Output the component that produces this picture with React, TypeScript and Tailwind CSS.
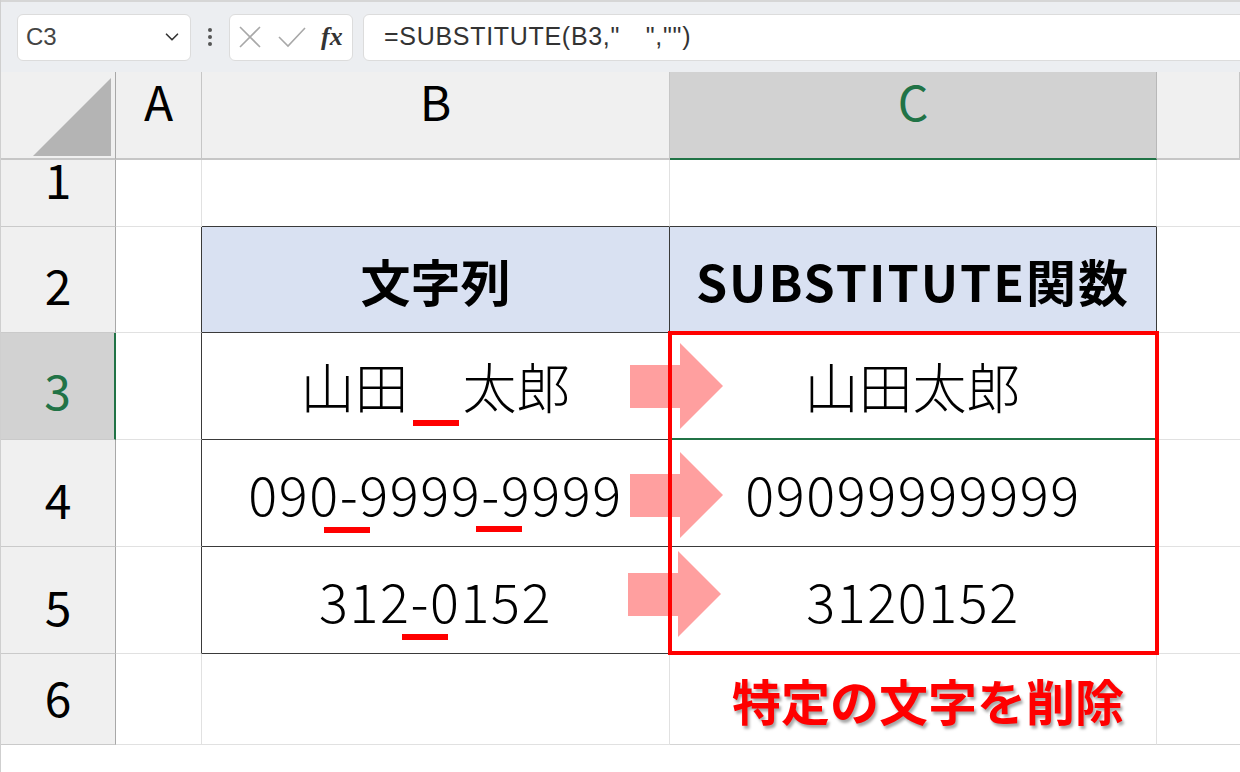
import { ChevronDown } from "lucide-react";

const cols = ["", "A", "B", "C", ""];

const tableRows = [
  { n: 1, b: "", c: "" },
  { n: 2, b: "文字列", c: "SUBSTITUTE関数" },
  { n: 3, b: "山田　太郎", c: "山田太郎" },
  { n: 4, b: "090-9999-9999", c: "09099999999" },
  { n: 5, b: "312-0152", c: "3120152" },
  { n: 6, b: "", c: "" },
];

const Arrow = ({ left, top }: { left: number; top: number }) => (
  <svg
    className="absolute"
    style={{ left, top }}
    width="93"
    height="86"
    viewBox="0 0 93 86"
  >
    <polygon points="0,22 50,22 50,0 93,43 50,86 50,65 0,65" fill="#ff9f9f" />
  </svg>
);

const Underline = ({ left, top }: { left: number; top: number }) => (
  <div className="absolute w-[46px] h-[6px] bg-[#ff0000]" style={{ left, top }} />
);

const FormulaBar = () => (
  <div className="h-[72px] bg-[#eceef1] border-t-2 border-[#d6d6d6] flex items-center pl-[16px]">
    <div className="w-[174px] h-[47px] shrink-0 bg-white rounded-[6px] border border-[#dcdcdc] flex items-center justify-between pl-[8px] pr-[7px]">
      <span className="text-[24px] text-[#444] font-['Liberation_Sans',sans-serif]">C3</span>
      <ChevronDown size={22} strokeWidth={1.8} className="text-[#333]" />
    </div>
    <div className="w-[38px] shrink-0 flex flex-col items-center gap-[3px]">
      <span className="w-[4px] h-[4px] rounded-full bg-[#555]" />
      <span className="w-[4px] h-[4px] rounded-full bg-[#555]" />
      <span className="w-[4px] h-[4px] rounded-full bg-[#555]" />
    </div>
    <div className="w-[124px] h-[47px] shrink-0 bg-white rounded-[6px] border border-[#dcdcdc] flex items-center pl-[9px] gap-[17px]">
      <svg width="22" height="22" viewBox="0 0 22 22">
        <path d="M1 1 L21 21 M21 1 L1 21" stroke="#a8a8a8" strokeWidth="1.6" fill="none" />
      </svg>
      <svg width="28" height="22" viewBox="0 0 28 22">
        <path d="M1 11 L10 20 L27 2" stroke="#a8a8a8" strokeWidth="1.6" fill="none" />
      </svg>
      <span className="text-[26px] italic font-semibold text-[#333] font-['Liberation_Serif',serif] leading-none -ml-[2px]">
        fx
      </span>
    </div>
    <div className="ml-[10px] w-[900px] h-[47px] shrink-0 bg-white rounded-[6px] border border-[#dcdcdc] flex items-center pl-[20px]">
      <span className="text-[25px] tracking-[0.7px] text-[#333] font-['Liberation_Sans','Noto_Sans_CJK_JP',sans-serif] whitespace-pre">
        =SUBSTITUTE(B3,"　","")
      </span>
    </div>
  </div>
);

export default function App() {
  return (
    <div className="w-[1240px] h-[772px] bg-white overflow-hidden border-l border-[#cfcfcf] font-['Noto_Sans_CJK_JP',sans-serif] text-black">
      <FormulaBar />
      <div className="relative grid grid-cols-[115px_86px_468px_487px_83px] grid-rows-[88px_67px_106px_107px_107px_107px_91px]">
        {/* column headers */}
        {cols.map((label, i) => {
          if (i === 0)
            return (
              <div
                key={i}
                className="bg-[#f0f0f0] border-r border-r-[#a8a8a8] border-b-2 border-b-[#c6c6c6] flex items-end justify-end pr-[4px] pb-[2px]"
              >
                <svg width="78" height="78" viewBox="0 0 78 78">
                  <polygon points="0,78 78,78 78,0" fill="#b4b4b4" />
                </svg>
              </div>
            );
          const selected = label === "C";
          return (
            <div
              key={i}
              className={
                selected
                  ? "bg-[#d2d2d2] border-r border-r-[#b8b8b8] border-b-2 border-b-[#217346] text-[#217346] flex justify-center items-start pt-[4px] text-[48px] leading-none"
                  : "bg-[#f0f0f0] border-r border-r-[#c6c6c6] border-b-2 border-b-[#c6c6c6] flex justify-center items-start pt-[4px] text-[48px] leading-none"
              }
            >
              {label}
            </div>
          );
        })}

        {tableRows.map((r) => {
          const inTable = r.n >= 2 && r.n <= 5;
          const isHead = r.n === 2;
          const textCls = isHead
            ? "text-[50px] font-bold leading-none"
            : r.n === 3
            ? "text-[54px] font-light leading-none"
            : "text-[54px] font-light tracking-[1.6px] leading-none";
          return [
            <div
              key={`h${r.n}`}
              className={
                r.n === 3
                  ? "bg-[#d2d2d2] border-r-2 border-r-[#217346] border-b border-b-[#cacaca] text-[#217346] flex justify-center items-end pb-[26px] text-[48px] leading-none"
                  : "bg-[#f0f0f0] border-r border-r-[#a8a8a8] border-b border-b-[#cacaca] flex justify-center items-end pb-[24px] text-[48px] leading-none"
              }
            >
              {r.n}
            </div>,
            <div
              key={`a${r.n}`}
              className={
                inTable
                  ? "border-b border-b-[#e1e1e1] border-r border-r-[#3a3a3a]"
                  : "border-b border-b-[#e1e1e1] border-r border-r-[#e1e1e1]"
              }
            />,
            <div
              key={`b${r.n}`}
              className={
                (isHead ? "bg-[#d9e1f2] " : "") +
                (inTable
                  ? "border-r border-r-[#3a3a3a] border-b border-b-[#3a3a3a] "
                  : r.n === 1
                  ? "border-r border-r-[#e1e1e1] border-b border-b-[#3a3a3a] "
                  : "border-r border-r-[#e1e1e1] border-b border-b-[#e1e1e1] ") +
                "flex items-center justify-center whitespace-nowrap " +
                textCls
              }
            >
              {r.b}
            </div>,
            <div
              key={`c${r.n}`}
              className={
                (isHead ? "bg-[#d9e1f2] tracking-[2px] " : "") +
                (r.n === 3
                  ? "border-r-2 border-r-[#217346] border-b-2 border-b-[#217346] "
                  : inTable
                  ? "border-r border-r-[#3a3a3a] border-b border-b-[#3a3a3a] "
                  : r.n === 1
                  ? "border-r border-r-[#e1e1e1] border-b border-b-[#3a3a3a] "
                  : "border-r border-r-[#e1e1e1] border-b border-b-[#d4d4d4] ") +
                "flex items-center justify-center whitespace-nowrap " +
                textCls
              }
            >
              {r.n === 6 ? (
                <span className="pl-[30px] text-[49px] font-bold tracking-normal text-[#ff0000] [text-shadow:2px_3px_3px_rgba(0,0,0,0.35)]">
                  特定の文字を削除
                </span>
              ) : (
                r.c
              )}
            </div>,
            <div
              key={`d${r.n}`}
              className={
                r.n === 6
                  ? "border-b border-b-[#d4d4d4]"
                  : "border-b border-b-[#e1e1e1]"
              }
            />,
          ];
        })}

        {/* overlays */}
        <Arrow left={629} top={271} />
        <Arrow left={629} top={380} />
        <Arrow left={627} top={479} />

        <Underline left={412} top={348} />
        <Underline left={323} top={455} />
        <Underline left={475} top={454} />
        <Underline left={401} top={562} />

        <div className="absolute left-[667px] top-[259px] w-[491px] h-[324px] border-4 border-[#ff0000]" />
      </div>
    </div>
  );
}
